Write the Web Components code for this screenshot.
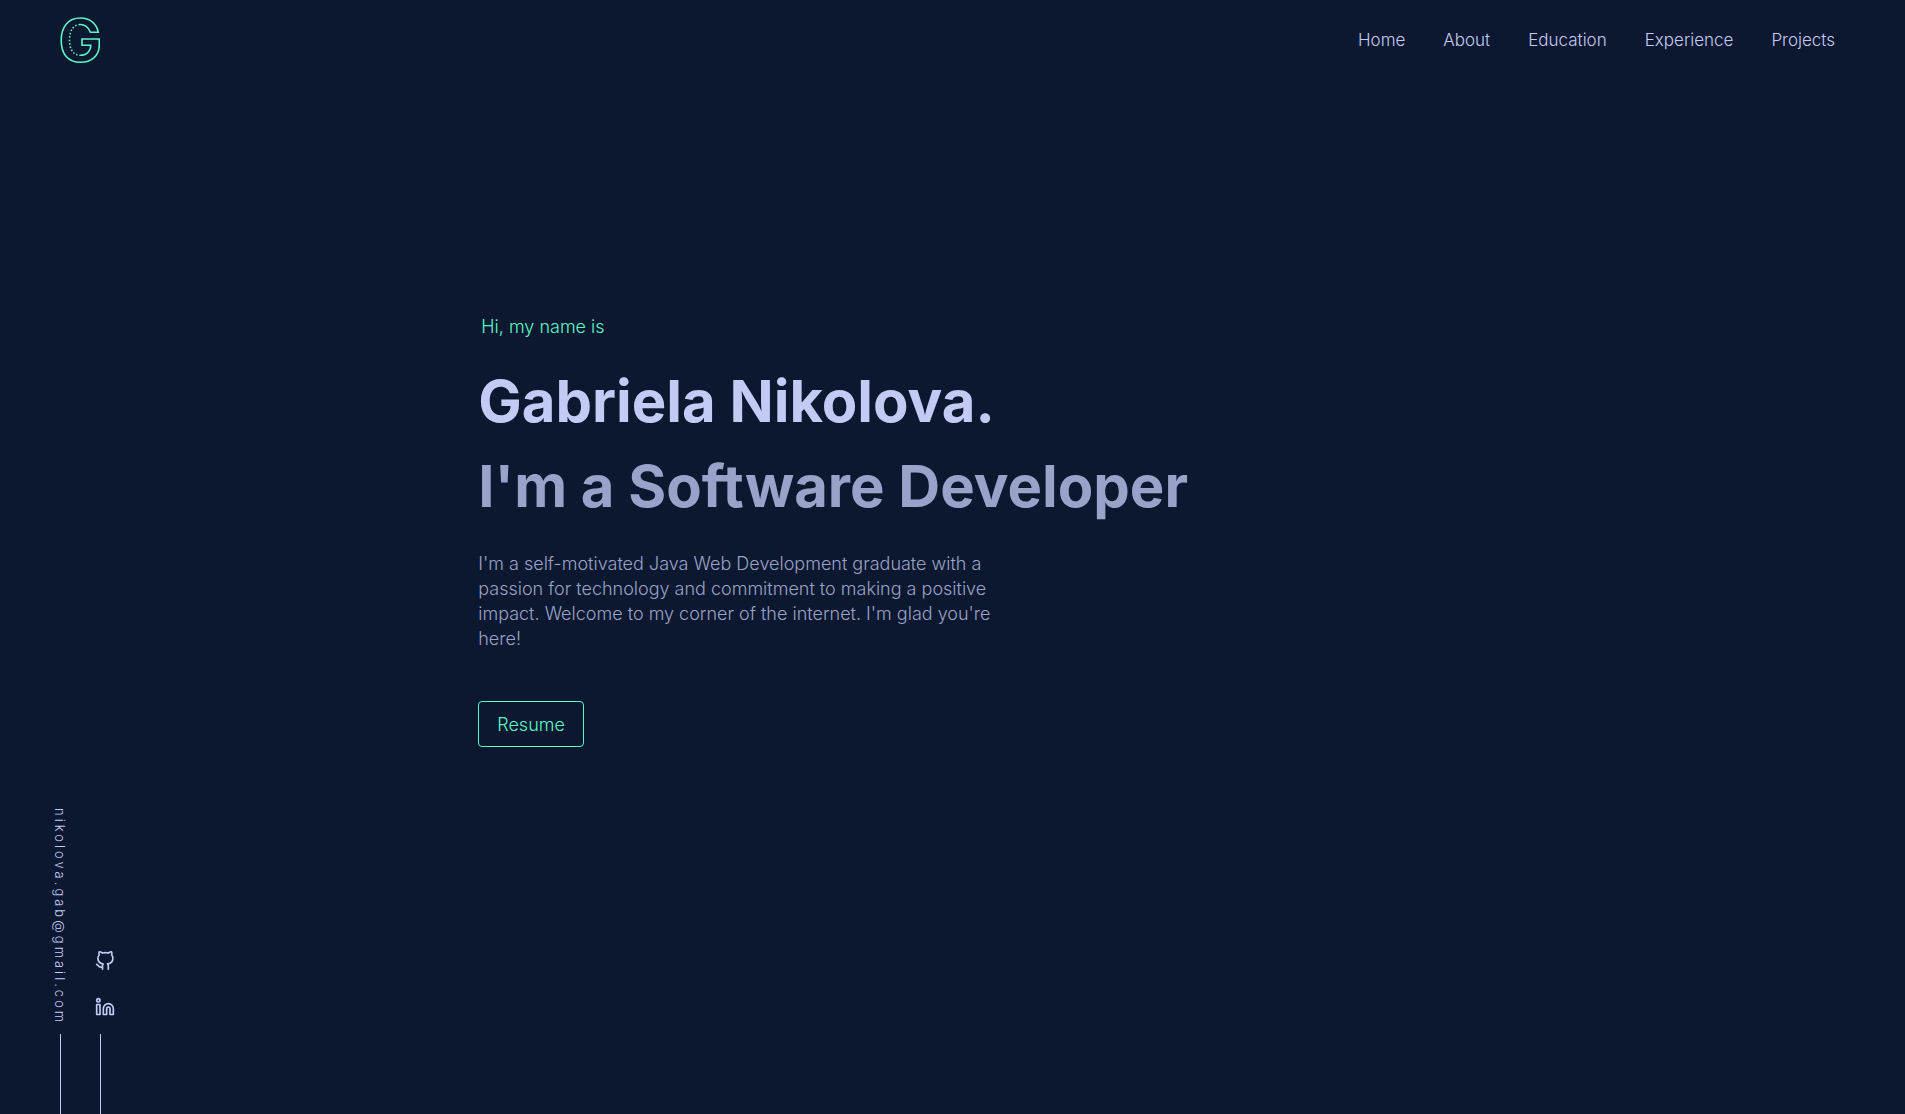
<!DOCTYPE html>
<html lang="en">
<head>
<meta charset="utf-8">
<meta name="viewport" content="width=device-width, initial-scale=1">
<title>Gabriela Nikolova</title>
<style>
:root{--bg:#0c182f;--light:#c3cbf5;--muted:#99a2c9;--accent:#5af8c8}
body{margin:0;background:var(--bg);color:var(--light);font-family:Inter,"Liberation Sans",sans-serif}
</style>
</head>
<body>
<portfolio-page>
  <site-header slot="header">
    <nav-link href="#home">Home</nav-link>
    <nav-link href="#about">About</nav-link>
    <nav-link href="#education">Education</nav-link>
    <nav-link href="#experience">Experience</nav-link>
    <nav-link href="#projects">Projects</nav-link>
  </site-header>
  <hero-intro>
    <span slot="greeting">Hi, my name is</span>
    <span slot="name">Gabriela Nikolova.</span>
    <span slot="role">I'm a Software Developer</span>
    <span slot="bio">I'm a self-motivated Java Web Development graduate with a passion for technology and commitment to making a positive impact. Welcome to my corner of the internet. I'm glad you're here!</span>
    <span slot="action">Resume</span>
  </hero-intro>
  <contact-rail slot="rail">nikolova.gab@gmail.com</contact-rail>
</portfolio-page>
<script>
const define = (name, html, setup) => customElements.define(name, class extends HTMLElement {
  constructor() {
    super();
    const t = document.createElement('template');
    t.innerHTML = html;
    this.attachShadow({ mode: 'open' }).append(t.content.cloneNode(true));
  }
  connectedCallback() { if (setup) setup(this); }
});

define('portfolio-page', `
<style>
:host{display:flex;flex-direction:column;height:100vh;overflow:hidden;position:relative}
main{flex:1;padding:0 25%}
</style>
<slot name="header"></slot><main><slot></slot></main><slot name="rail"></slot>`);

define('brand-logo', `
<style>
:host{display:block}
a,svg{display:block}
svg{width:40px;height:48px;fill:none;stroke:var(--accent);stroke-width:1.6}
</style>
<a href="#home" aria-label="Home"><svg viewBox="0 -1 40 48">
<path d="M20 7.5C25.5 7.5 28.5 10.5 30.500 15.300H38.300C36.500 6.500 30 1 20.500 1C8 1 1.200 10 1.200 23.500C1.200 37 8 45.300 20.500 45.300C31.500 45.300 39.300 38.500 39.300 28V22H22V28.300H30.800C30.600 34.500 26.500 38.300 20 38.300"/>
<path d="M20 7.500C13 8 9.500 14 9.500 23C9.500 32 13 38 20 38.300" stroke-dasharray="1.500 1.900"/>
</svg></a>`);

define('nav-link', `
<style>
:host{display:block}
a{display:block;color:var(--light);text-decoration:none;font-size:17px;line-height:24px;font-weight:300}
</style>
<a><slot></slot></a>`, el => el.shadowRoot.querySelector('a').setAttribute('href', el.getAttribute('href')));

define('site-header', `
<style>
:host{display:flex;align-items:center;justify-content:space-between;height:80px;padding:0 70px 0 60px;box-sizing:border-box}
nav{display:flex;gap:38px}
</style>
<brand-logo></brand-logo><nav aria-label="Main"><slot></slot></nav>`);

define('hero-intro', `
<style>
:host{display:flex;flex-direction:column;align-items:flex-start;padding:233px 0 0 2px}
p,h1,h2{margin:0}
.greeting{padding-left:3px;font-size:18px;line-height:28px;font-weight:300;color:var(--accent)}
h1,h2{font-size:58px;line-height:85px;font-weight:700;white-space:nowrap}
h1{margin-top:18px;color:var(--light)}
h2{color:var(--muted)}
.bio{margin-top:22px;max-width:520px;font-size:18px;line-height:25px;font-weight:300;color:var(--muted)}
button{margin-top:50px;height:46px;padding:0 18px;border:1px solid var(--accent);border-radius:4px;background:transparent;color:var(--accent);font:inherit;font-size:18px;font-weight:300}
</style>
<p class="greeting"><slot name="greeting"></slot></p>
<h1><slot name="name"></slot></h1>
<h2><slot name="role"></slot></h2>
<p class="bio"><slot name="bio"></slot></p>
<button type="button"><slot name="action"></slot></button>`);

define('contact-rail', `
<style>
:host{position:absolute;left:48px;bottom:0;display:flex;align-items:flex-end;gap:23px}
.col{display:flex;flex-direction:column;align-items:center}
.col::after{content:"";width:1px;height:80px;background:var(--light)}
.social{align-items:flex-start}
.social::after{margin-left:5px}
.mail{margin-bottom:9px;writing-mode:vertical-rl;color:var(--light);text-decoration:none;font-size:13px;line-height:24px;letter-spacing:3px;font-weight:300}
.icons{display:flex;flex-direction:column;gap:26px;margin-bottom:17px}
.icons a,svg{display:block}
svg{width:20px;height:20px;overflow:visible;fill:none;stroke:var(--light);stroke-width:2;stroke-linecap:round;stroke-linejoin:round}
</style>
<div class="col"><a class="mail" href="mailto:nikolova.gab@gmail.com"><slot></slot></a></div>
<div class="col social"><div class="icons">
<a href="#github" aria-label="GitHub"><svg viewBox="0 0 24 24"><path d="M9 19c-5 1.500-5-2.500-7-3m14 6v-3.870a3.370 3.370 0 0 0-.94-2.610c3.140-.35 6.440-1.540 6.440-7A5.440 5.440 0 0 0 20 4.770 5.070 5.070 0 0 0 19.910 1S18.730.65 16 2.480a13.380 13.380 0 0 0-7 0C6.270.65 5.090 1 5.090 1A5.070 5.070 0 0 0 5 4.770a5.440 5.440 0 0 0-1.500 3.780c0 5.420 3.300 6.610 6.440 7A3.370 3.370 0 0 0 9 18.130V22"/></svg></a>
<a href="#linkedin" aria-label="LinkedIn"><svg viewBox="0 0 24 24"><circle cx="4" cy="4" r="2"/><path d="M2 9h4v12H2zM16 8a6 6 0 0 1 6 6v7h-4v-7a2 2 0 0 0-4 0v7h-4v-7a6 6 0 0 1 6-6z"/></svg></a>
</div></div>`);
</script>
</body>
</html>
